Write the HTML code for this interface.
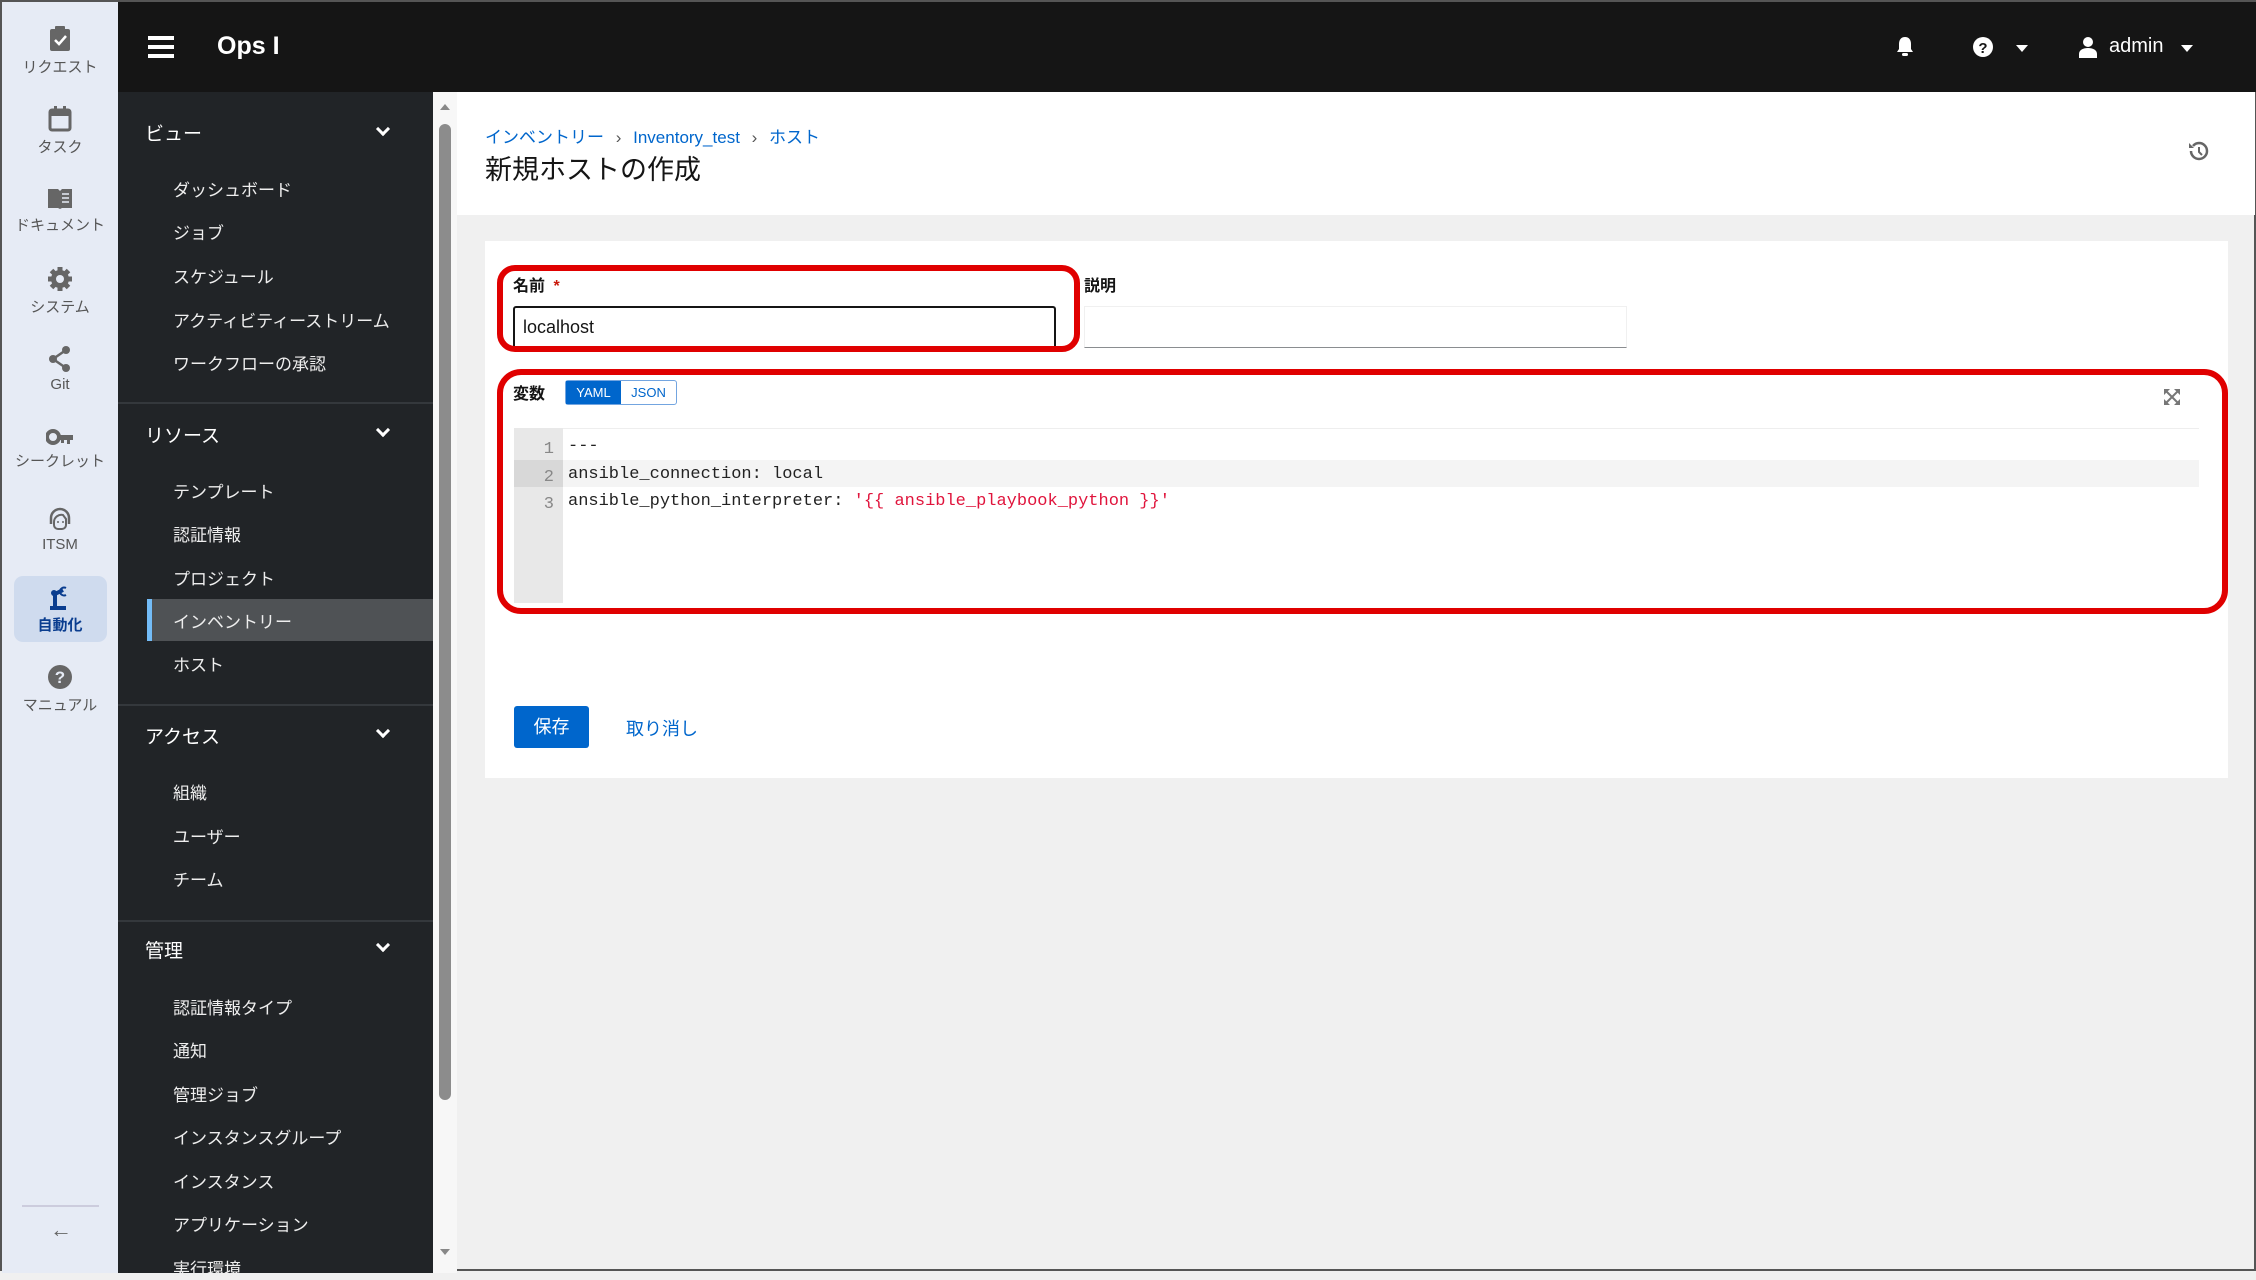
<!DOCTYPE html>
<html><head><meta charset="utf-8">
<style>
*{box-sizing:border-box;margin:0;padding:0}
body{width:2256px;height:1271px;overflow:hidden;position:relative;background:#f0f0f0;font-family:"Liberation Sans","Noto Sans CJK JP",sans-serif;border:2px solid #555}
.abs{position:absolute}
#rail{left:0;top:0;width:116px;height:1271px;background:#e6ebf5}
.ri{position:absolute;left:0;width:116px;text-align:center;font-size:15px;color:#555}
.ri svg{display:block;margin:0 auto 4px}
#top{left:116px;top:0;width:2140px;height:90px;background:#151515;color:#fff}
#nav{left:116px;top:90px;width:315px;height:1181px;background:#212427;color:#fff}
.sh{position:absolute;left:27px;font-size:19px}
.chev{position:absolute;left:260px;width:10px;height:10px;border-right:3px solid #fff;border-bottom:3px solid #fff;transform:rotate(45deg)}
.it{position:absolute;left:55px;font-size:17px;color:#eee}
.sep{position:absolute;left:0;width:315px;height:2px;background:#34383c}
#sb{left:431px;top:90px;width:24px;height:1181px;background:#f7f7f7}
#hdr{left:455px;top:90px;width:1798px;height:123px;background:#fff}
#card{left:483px;top:239px;width:1743px;height:537px;background:#fff}
.red{position:absolute;border:6px solid #e00000;border-radius:18px}
.mono{font-family:"Liberation Mono","DejaVu Sans Mono",monospace;font-size:17px;color:#222}
</style></head><body>
<div id="rail" class="abs">
 <div class="ri" style="top:24px"><svg width="24" height="26" viewBox="0 0 24 26"><rect x="2" y="3" width="20" height="22" rx="2" fill="#666"/><rect x="7" y="0" width="10" height="6" rx="1" fill="#666"/><path d="M7 14l4 4 7-8" stroke="#fff" stroke-width="2.5" fill="none"/></svg>リクエスト</div>
 <div class="ri" style="top:104px"><svg width="24" height="26" viewBox="0 0 24 26"><rect x="2" y="4" width="20" height="20" rx="2" fill="none" stroke="#666" stroke-width="3"/><rect x="2" y="4" width="20" height="6" fill="#666"/><rect x="6" y="0" width="3" height="6" fill="#666"/><rect x="15" y="0" width="3" height="6" fill="#666"/></svg>タスク</div>
 <div class="ri" style="top:184px"><svg width="26" height="24" viewBox="0 0 26 24"><path d="M1 3h10l2 2 2-2h10v19H15l-2 1-2-1H1z" fill="#666"/><path d="M15 8h7M15 12h7M15 16h7" stroke="#e6ebf5" stroke-width="1.5"/></svg>ドキュメント</div>
 <div class="ri" style="top:264px"><svg width="26" height="26" viewBox="0 0 26 26"><circle cx="13" cy="13" r="9" fill="#666"/><g stroke="#666" stroke-width="5"><path d="M13 1v24M1 13h24M4.5 4.5l17 17M21.5 4.5l-17 17"/></g><circle cx="13" cy="13" r="4" fill="#e6ebf5"/></svg>システム</div>
 <div class="ri" style="top:344px"><svg width="24" height="26" viewBox="0 0 24 26"><circle cx="18" cy="4" r="4" fill="#666"/><circle cx="5" cy="13" r="4" fill="#666"/><circle cx="18" cy="22" r="4" fill="#666"/><path d="M18 4L5 13l13 9" stroke="#666" stroke-width="2.5" fill="none"/></svg>Git</div>
 <div class="ri" style="top:426px"><svg width="28" height="18" viewBox="0 0 28 18"><circle cx="7" cy="9" r="6" fill="none" stroke="#666" stroke-width="4"/><path d="M12 7h15v5h-3v4h-3v-4h-3v3h-3v-3h-3z" fill="#666"/></svg>シークレット</div>
 <div class="ri" style="top:504px"><svg width="26" height="26" viewBox="0 0 26 26"><path d="M4 18v-6a9 9 0 0118 0v6" stroke="#666" stroke-width="2.5" fill="none"/><path d="M7 16c0-5 5-8 9-7l3 4v6a4 4 0 01-4 4h-4a4 4 0 01-4-4z" fill="none" stroke="#666" stroke-width="2"/><circle cx="11" cy="16" r="1" fill="#666"/><circle cx="16" cy="16" r="1" fill="#666"/></svg>ITSM</div>
 <div class="abs" style="left:12px;top:574px;width:93px;height:66px;background:#cfdbee;border-radius:9px"></div>
 <div class="ri" style="top:584px;color:#0a3d8f;font-weight:bold"><svg width="26" height="24" viewBox="0 0 26 24"><rect x="3" y="20" width="16" height="4" fill="#0a3d8f"/><path d="M8 20V8l8-4" stroke="#0a3d8f" stroke-width="4" fill="none"/><circle cx="7" cy="7" r="3" fill="#0a3d8f"/><path d="M19 2a4 4 0 100 7" stroke="#0a3d8f" stroke-width="2" fill="none"/></svg>自動化</div>
 <div class="ri" style="top:662px"><svg width="26" height="26" viewBox="0 0 26 26"><circle cx="13" cy="13" r="12" fill="#666"/><text x="13" y="19" font-size="17" font-weight="bold" text-anchor="middle" fill="#e6ebf5" font-family="Liberation Sans">?</text></svg>マニュアル</div>
 <div class="abs" style="left:20px;top:1203px;width:77px;height:2px;background:#ccd"></div>
 <div class="abs" style="left:48px;top:1215px;font-size:22px;color:#666">←</div>
</div>
<div id="top" class="abs">
 <div class="abs" style="left:30px;top:34px;width:26px;height:4px;background:#fff;box-shadow:0 9px 0 #fff,0 18px 0 #fff"></div>
 <div class="abs" style="left:99px;top:30px;font-size:25px;font-weight:bold">Ops I</div>
 <svg class="abs" style="left:1778px;top:34px" width="18" height="22" viewBox="0 0 18 22"><path d="M9 1c-4 0-6 3-6 7v5l-2 3h16l-2-3V8c0-4-2-7-6-7z" fill="#fff"/><rect x="6" y="17" width="6" height="3" rx="1.5" fill="#fff"/></svg>
 <svg class="abs" style="left:1855px;top:35px" width="20" height="20" viewBox="0 0 20 20"><circle cx="10" cy="10" r="10" fill="#fff"/><text x="10" y="16" font-size="15" font-weight="bold" text-anchor="middle" fill="#151515" font-family="Liberation Sans">?</text></svg>
 <div class="abs" style="left:1898px;top:43px;border:6px solid transparent;border-top:7px solid #fff"></div>
 <svg class="abs" style="left:1960px;top:34px" width="20" height="22" viewBox="0 0 20 22"><circle cx="10" cy="6" r="5" fill="#fff"/><path d="M1 22v-4c0-4 4-6 9-6s9 2 9 6v4z" fill="#fff"/></svg>
 <div class="abs" style="left:1991px;top:33px;font-size:20px">admin</div>
 <div class="abs" style="left:2063px;top:43px;border:6px solid transparent;border-top:7px solid #fff"></div>
</div>
<div id="nav" class="abs">
 <div class="sh" style="top:27px">ビュー</div><div class="chev" style="top:32px"></div>
 <div class="it" style="top:84px">ダッシュボード</div>
 <div class="it" style="top:127px">ジョブ</div>
 <div class="it" style="top:171px">スケジュール</div>
 <div class="it" style="top:215px">アクティビティーストリーム</div>
 <div class="it" style="top:258px">ワークフローの承認</div>
 <div class="sep" style="top:310px"></div>
 <div class="sh" style="top:329px">リソース</div><div class="chev" style="top:333px"></div>
 <div class="it" style="top:386px">テンプレート</div>
 <div class="it" style="top:429px">認証情報</div>
 <div class="it" style="top:473px">プロジェクト</div>
 <div class="abs" style="left:29px;top:507px;width:286px;height:42px;background:#4f5255;border-left:5px solid #73bcf7"></div>
 <div class="it" style="top:516px">インベントリー</div>
 <div class="it" style="top:559px">ホスト</div>
 <div class="sep" style="top:612px"></div>
 <div class="sh" style="top:630px">アクセス</div><div class="chev" style="top:634px"></div>
 <div class="it" style="top:687px">組織</div>
 <div class="it" style="top:731px">ユーザー</div>
 <div class="it" style="top:774px">チーム</div>
 <div class="sep" style="top:828px"></div>
 <div class="sh" style="top:844px">管理</div><div class="chev" style="top:848px"></div>
 <div class="it" style="top:902px">認証情報タイプ</div>
 <div class="it" style="top:945px">通知</div>
 <div class="it" style="top:989px">管理ジョブ</div>
 <div class="it" style="top:1032px">インスタンスグループ</div>
 <div class="it" style="top:1076px">インスタンス</div>
 <div class="it" style="top:1119px">アプリケーション</div>
 <div class="it" style="top:1163px">実行環境</div>
</div>
<div id="sb" class="abs">
 <div class="abs" style="left:7px;top:12px;border:5px solid transparent;border-bottom:6px solid #888;border-top:0"></div>
 <div class="abs" style="left:6px;top:32px;width:12px;height:976px;background:#8c8c8c;border-radius:6px"></div>
 <div class="abs" style="left:7px;top:1157px;border:5px solid transparent;border-top:6px solid #888;border-bottom:0"></div>
</div>
<div id="hdr" class="abs">
 <div class="abs" style="left:28px;top:31px;font-size:17px;color:#0066cc">インベントリー <span style="color:#555;margin:0 7px">›</span> Inventory_test <span style="color:#555;margin:0 7px">›</span> ホスト</div>
 <div class="abs" style="left:28px;top:56px;font-size:27px;color:#151515">新規ホストの作成</div>
 <svg class="abs" style="left:1730px;top:48px" width="22" height="22" viewBox="0 0 22 22"><path d="M4 11a8 8 0 108-8 8 8 0 00-6 3" stroke="#666" stroke-width="2.5" fill="none"/><path d="M2 3v5h5z" fill="#666"/><path d="M12 7v5l3 3" stroke="#666" stroke-width="2" fill="none"/></svg>
</div>
<div id="card" class="abs">
 <div class="abs" style="left:28px;top:31px;font-size:16px;font-weight:bold;color:#151515">名前 <span style="color:#c9190b;margin-left:4px">*</span></div>
 <div class="abs" style="left:28px;top:65px;width:543px;height:42px;border:2px solid #151515;border-bottom:none;border-radius:3px 3px 0 0;font-size:18px;padding:9px 8px;color:#151515">localhost</div>
 <div class="abs" style="left:599px;top:31px;font-size:16px;font-weight:bold;color:#151515">説明</div>
 <div class="abs" style="left:599px;top:65px;width:543px;height:42px;border:1px solid #f0f0f0;border-bottom:1px solid #8a8d90"></div>
 <div class="abs" style="left:28px;top:139px;font-size:16px;font-weight:bold;color:#151515">変数</div>
 <div class="abs" style="left:80px;top:139px;width:112px;height:25px;border:1px solid #73a5e0;border-radius:3px;font-size:13px;display:flex">
  <div style="width:55px;background:#0066cc;color:#fff;text-align:center;line-height:23px">YAML</div>
  <div style="flex:1;color:#0066cc;text-align:center;line-height:23px">JSON</div></div>
 <svg class="abs" style="left:1678px;top:147px" width="18" height="18" viewBox="0 0 18 18"><path d="M1 1h6L1 7zM17 1h-6l6 6zM1 17h6L1 11zM17 17h-6l6-6z" fill="#777"/><path d="M3 3l12 12M15 3L3 15" stroke="#777" stroke-width="2"/></svg>
 <div class="abs" style="left:29px;top:187px;width:1685px;height:175px;border-top:1px solid #eee;background:#fff"></div>
 <div class="abs" style="left:29px;top:187px;width:49px;height:175px;background:#e8e8e8"></div>
 <div class="abs" style="left:78px;top:219px;width:1636px;height:27px;background:#f4f4f4"></div>
 <div class="abs" style="left:29px;top:219px;width:49px;height:27px;background:#d8d8d8"></div>
 <div class="abs mono" style="left:29px;top:195px;width:40px;text-align:right;color:#888;line-height:27.5px">1<br>2<br>3</div>
 <div class="abs mono" style="left:83px;top:192px;line-height:27.5px;white-space:pre">---
ansible_connection: local
ansible_python_interpreter: <span style="color:#e0143c">'{{ ansible_playbook_python }}'</span></div>
 <div class="abs" style="left:29px;top:465px;width:75px;height:42px;background:#0066cc;border-radius:3px;color:#fff;font-size:18px;text-align:center;line-height:42px">保存</div>
 <div class="abs" style="left:141px;top:474px;font-size:18px;color:#0066cc">取り消し</div>
</div>
<div class="red" style="left:495px;top:263px;width:583px;height:87px"></div>
<div class="red" style="left:495px;top:367px;width:1731px;height:245px;border-radius:24px"></div>
</body></html>
